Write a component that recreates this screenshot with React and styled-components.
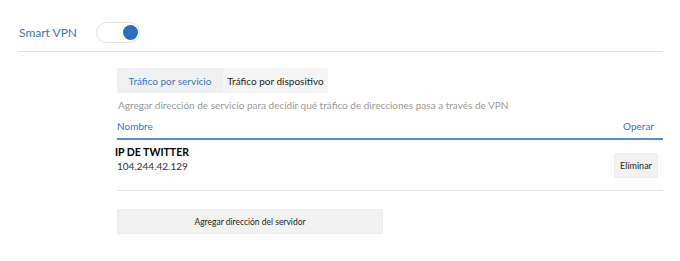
import React, { useState } from "react";
import styled, { createGlobalStyle } from "styled-components";

const Global = createGlobalStyle`
  html, body { margin: 0; padding: 0; background: #fff; }
  body { font-family: "Lato", "Open Sans", sans-serif; color: #333; }
  * { box-sizing: border-box; }
`;

const Page = styled.div`
  width: 680px;
  height: 261px;
  padding: 21px 17px 0 18px;
`;

const HeaderRow = styled.div`
  display: flex;
  align-items: center;
  height: 22px;
  padding-left: 1px;
  gap: 19px;
`;

const Title = styled.span`
  font-size: 12px;
  color: #3a74b8;
  width: 58px;
  white-space: nowrap;
`;

const Toggle = styled.button`
  position: relative;
  width: 44px;
  height: 21px;
  border-radius: 11px;
  border: 1px solid #e4e4e4;
  background: #fff;
  padding: 0;
  cursor: pointer;
`;

const Knob = styled.span`
  position: absolute;
  top: 2px;
  left: ${(p) => (p.$on ? "26px" : "2px")};
  width: 15px;
  height: 15px;
  border-radius: 50%;
  background: #2a6cc2;
`;

const Divider = styled.div`
  height: 1px;
  background: #e3e3e3;
  margin-top: 8px;
`;

const Content = styled.div`
  margin-left: 99px;
  margin-top: 16px;
`;

const Tabs = styled.div`
  display: flex;
  height: 25px;
`;

const Tab = styled.div`
  display: flex;
  align-items: center;
  justify-content: center;
  white-space: nowrap;
  width: ${(p) => p.$w}px;
  font-size: 10px;
  background: ${(p) => (p.$active ? "#eef0f2" : "#f5f5f5")};
  color: ${(p) => (p.$active ? "#3a78c2" : "#222")};
`;

const Hint = styled.div`
  font-size: 10px;
  color: #999;
  margin-top: 6px;
  padding-left: 1px;
  white-space: nowrap;
`;

const TableHead = styled.div`
  display: flex;
  justify-content: space-between;
  font-size: 10px;
  color: #3a74b8;
  margin-top: 7px;
  padding: 0 9px 0 0;
  height: 22px;
  line-height: 16px;
  border-bottom: 2px solid #5b8cc4;
`;

const Row = styled.div`
  display: flex;
  justify-content: space-between;
  align-items: flex-start;
  padding: 4px 5px 12px 0;
  border-bottom: 1px solid #e6e6e6;
`;

const Cell = styled.div`
  display: flex;
  flex-direction: column;
`;

const Name = styled.span`
  font-size: 10.5px;
  font-weight: 700;
  color: #000;
  margin-left: -2px;
  line-height: 16px;
`;

const Ip = styled.span`
  font-size: 10px;
  color: #333;
  line-height: 16px;
  margin-top: -2px;
`;

const SmallButton = styled.button`
  width: 44px;
  height: 25px;
  margin-top: 9px;
  border: 1px solid #ececec;
  border-radius: 2px;
  background: #f2f2f2;
  font-family: inherit;
  font-size: 9px;
  color: #222;
  padding: 0;
  cursor: pointer;
`;

const WideButton = styled.button`
  width: 266px;
  height: 25px;
  margin-top: 18px;
  border: 1px solid #ececec;
  border-radius: 2px;
  background: #f2f2f2;
  font-family: inherit;
  font-size: 8.5px;
  color: #222;
  padding: 0;
  cursor: pointer;
`;

export default function App() {
  const [on, setOn] = useState(true);
  return (
    <Page>
      <Global />
      <HeaderRow>
        <Title>Smart VPN</Title>
        <Toggle onClick={() => setOn(!on)}>
          <Knob $on={on} />
        </Toggle>
      </HeaderRow>
      <Divider />
      <Content>
        <Tabs>
          <Tab $active $w={106}>Tráfico por servicio</Tab>
          <Tab $w={105}>Tráfico por dispositivo</Tab>
        </Tabs>
        <Hint>
          Agregar dirección de servicio para decidir qué tráfico de direcciones pasa a través de VPN
        </Hint>
        <TableHead>
          <span>Nombre</span>
          <span>Operar</span>
        </TableHead>
        <Row>
          <Cell>
            <Name>IP DE TWITTER</Name>
            <Ip>104.244.42.129</Ip>
          </Cell>
          <SmallButton>Eliminar</SmallButton>
        </Row>
        <WideButton>Agregar dirección del servidor</WideButton>
      </Content>
    </Page>
  );
}
